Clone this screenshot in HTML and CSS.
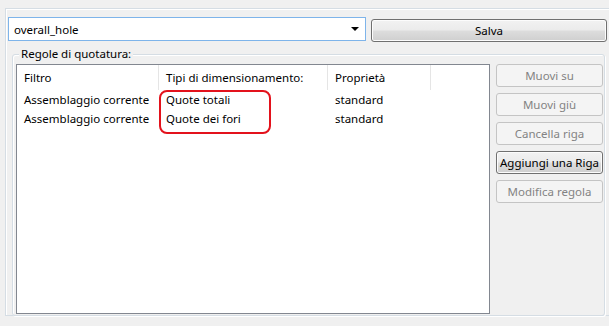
FILE: index.html
```html
<!DOCTYPE html>
<html lang="it">
<head>
<meta charset="utf-8">
<link rel="stylesheet" href="styles.css">
</head>
<body>
<div class="frame">
  <div class="toprow">
    <div class="combo">
      <span class="combo-text">overall_hole</span>
      <span class="combo-arrow"></span>
    </div>
    <button class="btn btn-main salva">Salva</button>
  </div>
  <div class="group">
    <span class="legend">Regole di quotatura:</span>
    <div class="group-body">
      <div class="list">
        <div class="list-head">
          <div class="col c1">Filtro</div>
          <div class="col c2">Tipi di dimensionamento:</div>
          <div class="col c3">Proprietà</div>
          <div class="col c4"></div>
        </div>
        <div class="row">
          <div class="cell c1">Assemblaggio corrente</div>
          <div class="cell c2">Quote totali</div>
          <div class="cell c3">standard</div>
        </div>
        <div class="row">
          <div class="cell c1">Assemblaggio corrente</div>
          <div class="cell c2">Quote dei fori</div>
          <div class="cell c3">standard</div>
        </div>
        <div class="highlight"></div>
      </div>
      <div class="buttons">
        <button class="btn btn-off">Muovi su</button>
        <button class="btn btn-off">Muovi giù</button>
        <button class="btn btn-off">Cancella riga</button>
        <button class="btn btn-main">Aggiungi una Riga</button>
        <button class="btn btn-off">Modifica regola</button>
      </div>
    </div>
  </div>
</div>
</body>
</html>
```
FILE: styles.css
```css
html, body {
  margin: 0;
  padding: 0;
  background: #f0f0f0;
  overflow: hidden;
  width: 609px;
  height: 326px;
  font-family: "Noto Sans", "Open Sans", sans-serif;
  font-size: 11.5px;
  color: #000;
}

.frame {
  margin: 8px 0 0 5px;
  width: 620px;
  height: 308px;
  border: 1px solid #d5dde4;
  box-shadow: inset 1px 1px 0 #ffffff;
  padding: 8px 0 0 2px;
  box-sizing: border-box;
}

.toprow {
  display: flex;
  align-items: flex-start;
  gap: 5px;
}

.combo {
  width: 358px;
  height: 24px;
  box-sizing: border-box;
  border: 1px solid #7eb4ea;
  background: #fff;
  display: flex;
  align-items: center;
  justify-content: space-between;
  padding: 0 6px 0 5px;
}

.combo-arrow {
  width: 0;
  height: 0;
  border-left: 4px solid transparent;
  border-right: 4px solid transparent;
  border-top: 4px solid #000;
}

.btn {
  font-family: inherit;
  font-size: 11.5px;
  height: 23px;
  box-sizing: border-box;
  border-radius: 3px;
  padding: 0;
  margin: 0;
  display: flex;
  align-items: center;
  justify-content: center;
  line-height: 1;
}

.btn-main {
  border: 1px solid #707070;
  color: #000;
  background: linear-gradient(#f2f2f2 0%, #ebebeb 48%, #dddddd 52%, #cfcfcf 100%);
  box-shadow: inset 0 0 0 1px #fcfcfc;
}

.btn-off {
  border: 1px solid #c4c4c4;
  color: #838383;
  background: #f4f4f4;
}

.salva {
  width: 236px;
  margin-top: 2px;
}

.group {
  position: relative;
  margin: 12px 0 0 4px;
  width: 593px;
  height: 262px;
  box-sizing: border-box;
  border: 1px solid #d5dde4;
  border-radius: 3px;
  box-shadow: inset 1px 1px 0 #ffffff, 1px 1px 0 #ffffff;
  padding: 9px 0 0 3px;
}

.legend {
  position: absolute;
  top: -9px;
  left: 6px;
  padding: 0 2px;
  background: #f0f0f0;
  line-height: 16px;
}

.group-body {
  display: flex;
  gap: 6px;
  align-items: flex-start;
}

.list {
  position: relative;
  width: 474px;
  height: 250px;
  box-sizing: border-box;
  border: 1px solid #828790;
  background: #fff;
}

.list-head {
  display: flex;
  height: 25px;
  align-items: stretch;
}

.col {
  display: flex;
  align-items: center;
  padding-left: 7px;
  box-sizing: border-box;
  border-right: 1px solid #e5e5e5;
}

.c1 { width: 142px; }
.c2 { width: 169px; }
.c3 { width: 103px; }
.c4 { width: 58px; border-right: none; }

.row {
  display: flex;
  height: 19px;
  align-items: center;
}

.cell {
  padding-left: 7px;
  box-sizing: border-box;
  white-space: nowrap;
}

.highlight {
  position: absolute;
  left: 142px;
  top: 25px;
  width: 112px;
  height: 44px;
  box-sizing: border-box;
  border: 2px solid #e3121c;
  border-radius: 8px;
}

.buttons {
  display: flex;
  flex-direction: column;
  gap: 6px;
}

.buttons .btn {
  width: 107px;
}
```
